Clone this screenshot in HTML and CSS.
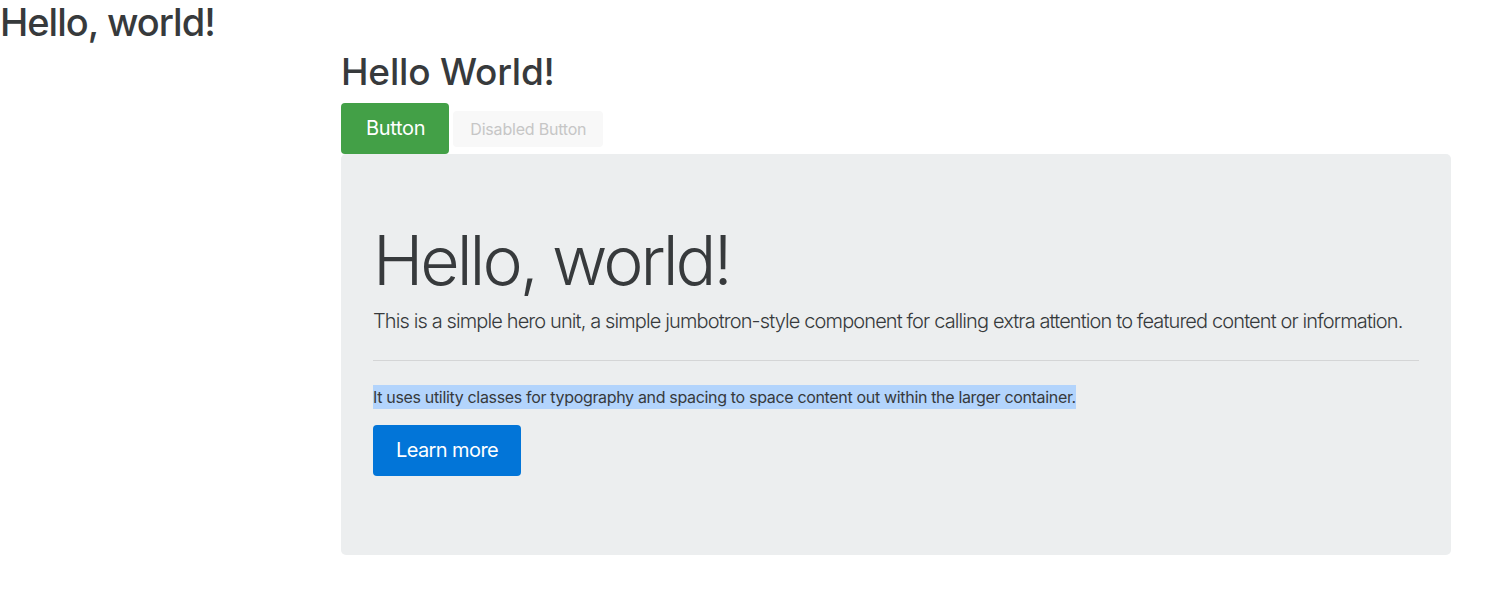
FILE: index.html
```html
<!DOCTYPE html>
<html lang="en">
<head>
<meta charset="utf-8">
<title>Hello, world!</title>
<link rel="stylesheet" href="styles.css">
</head>
<body>
<h1 class="page-title">Hello, world!</h1>
<div class="container">
  <h1 class="section-title">Hello World!</h1>
  <div class="actions">
    <button class="btn btn-success">Button</button>
    <button class="btn btn-disabled" disabled>Disabled Button</button>
  </div>
  <div class="jumbotron">
    <h1 class="display">Hello, world!</h1>
    <p class="lead">This is a simple hero unit, a simple jumbotron-style component for calling extra attention to featured content or information.</p>
    <hr class="divider">
    <p class="body-text"><span class="selected">It uses utility classes for typography and spacing to space content out within the larger container.</span></p>
    <p class="lead cta"><a class="btn btn-primary" href="#">Learn more</a></p>
  </div>
</div>
</body>
</html>
```
FILE: styles.css
```css
html, body {
  margin: 0;
  padding: 0;
  background: #ffffff;
  color: #373a3c;
  font-family: Inter, "Noto Sans", "Liberation Sans", sans-serif;
  font-size: 16px;
  line-height: 1.5;
}

.page-title {
  margin: 0;
  font-size: 38px;
  font-weight: 500;
  line-height: 44px;
  letter-spacing: -1px;
}

.container {
  margin-left: 341px;
  width: 1110px;
}

.section-title {
  margin: 6px 0 9px;
  font-size: 37px;
  font-weight: 500;
  line-height: 44px;
  letter-spacing: -0.2px;
}

.actions {
  display: flex;
  align-items: baseline;
  gap: 4px;
}

.btn {
  display: inline-block;
  font-family: inherit;
  font-weight: 400;
  border: 0;
  border-radius: 4px;
  text-decoration: none;
  vertical-align: baseline;
  cursor: pointer;
}

.btn-success {
  background: #43a047;
  color: #ffffff;
  font-size: 20px;
  line-height: 30px;
  padding: 10px 24px 11px 25px;
  letter-spacing: -0.3px;
}

.btn-disabled {
  background: #f8f8f8;
  color: #c6c6c6;
  font-size: 16px;
  line-height: 24px;
  padding: 6px 17px;
  letter-spacing: -0.2px;
  cursor: default;
}

.btn-primary {
  background: #0275d8;
  color: #ffffff;
  font-size: 20px;
  line-height: 30px;
  padding: 10px 23px 11px;
  letter-spacing: -0.6px;
}

.jumbotron {
  background: #eceeef;
  border-radius: 5px;
  padding: 64px 32px;
}

.display {
  margin: 0 0 3px;
  font-size: 68px;
  font-weight: 300;
  line-height: 85px;
  letter-spacing: -3px;
}

.lead {
  margin: 0 0 16px;
  font-size: 20px;
  font-weight: 300;
  line-height: 30px;
  letter-spacing: -0.88px;
}

.divider {
  margin: 24px 0;
  border: 0;
  border-top: 1px solid rgba(0, 0, 0, 0.1);
}

.body-text {
  margin: 0 0 16px;
  letter-spacing: -0.33px;
}

.selected {
  background: #b3d4fc;
  padding: 2px 0;
}

.cta {
  margin-bottom: 15px;
}
```
